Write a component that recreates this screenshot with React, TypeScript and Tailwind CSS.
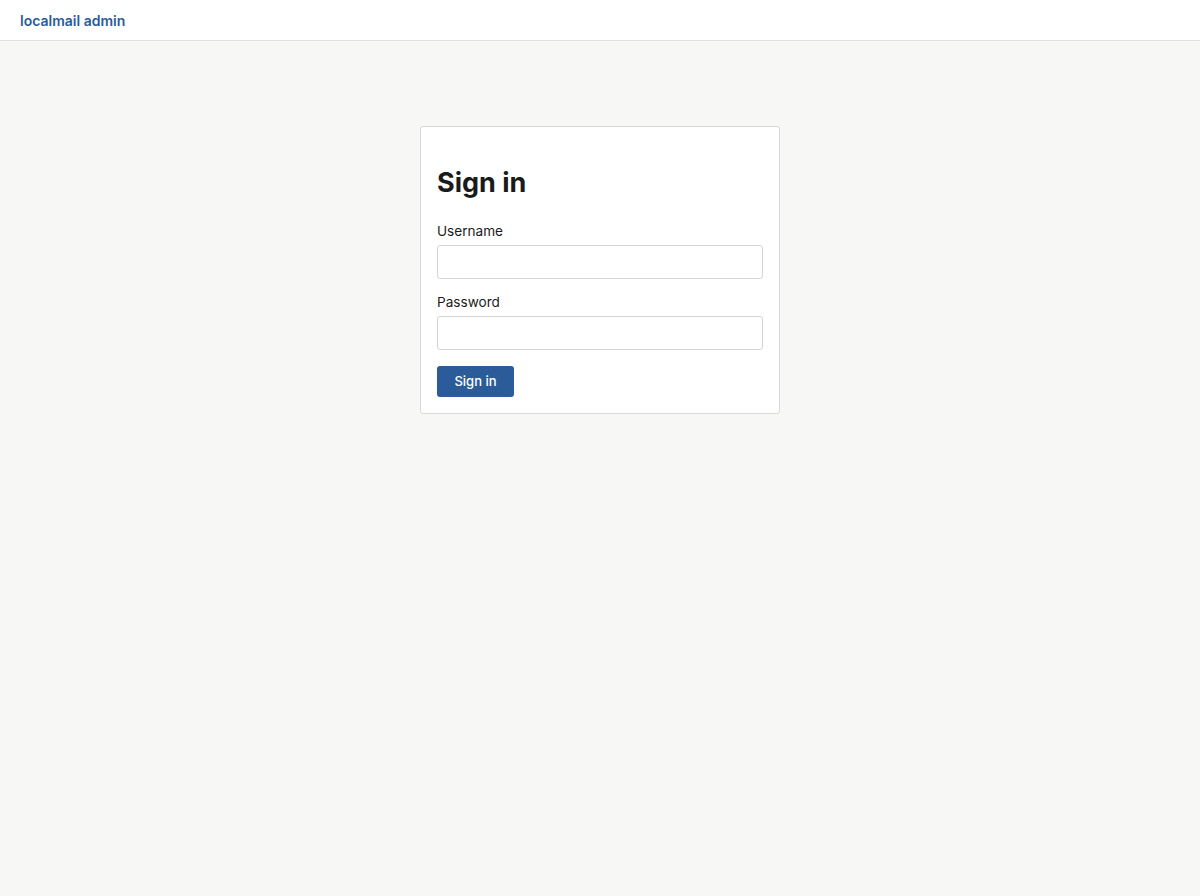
export default function App() {
  return (
    <div className="min-h-[896px] bg-[#f7f7f5] font-['Inter',sans-serif] text-[#1a1a1a]">
      <header className="h-[41px] bg-white border-b border-[#e2e2e2] flex items-center px-5">
        <span className="text-[14px] font-semibold text-[#2b5c99]">localmail admin</span>
      </header>

      <main className="flex justify-center pt-[85px]">
        <div className="w-[360px] bg-white border border-[#d9d9d9] rounded-[3px] px-4 pt-[39px] pb-4">
          <h1 className="text-[27px] leading-[34px] font-bold text-[#1a1a1a] mb-[21px]">Sign in</h1>
          <form onSubmit={(e) => e.preventDefault()}>
            <label className="block">
              <span className="block text-[13.6px] leading-[20px] mb-[4px]">Username</span>
              <input
                type="text"
                className="w-full h-[34px] border border-[#d4d4d4] rounded-[3px] bg-white px-2 text-sm outline-none"
              />
            </label>
            <label className="block mt-[13px]">
              <span className="block text-[13.6px] leading-[20px] mb-[4px]">Password</span>
              <input
                type="password"
                className="w-full h-[34px] border border-[#d4d4d4] rounded-[3px] bg-white px-2 text-sm outline-none"
              />
            </label>
            <button
              type="submit"
              className="mt-[16px] h-[31px] w-[77px] bg-[#2b5c99] text-white text-[13px] font-medium rounded-[3px]"
            >
              Sign in
            </button>
          </form>
        </div>
      </main>
    </div>
  )
}
